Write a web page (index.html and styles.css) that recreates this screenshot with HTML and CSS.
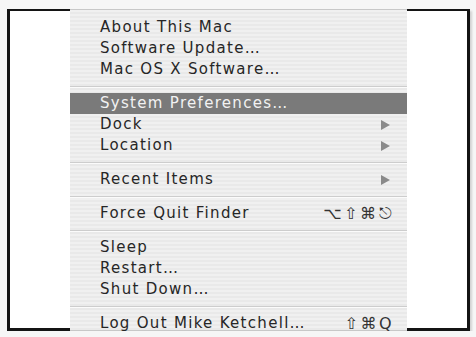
FILE: index.html
```html
<!DOCTYPE html>
<html>
<head>
<meta charset="utf-8">
<link rel="stylesheet" href="styles.css">
</head>
<body>
<div class="frame">
  <div class="side"></div>
  <div class="menu">
    <div class="item">About This Mac</div>
    <div class="item">Software Update…</div>
    <div class="item">Mac OS X Software…</div>
    <div class="sep"></div>
    <div class="item hl">System Preferences…</div>
    <div class="item">Dock<svg class="arrow" width="9" height="10" viewBox="0 0 9 10"><polygon points="0,0 9,5 0,10"/></svg></div>
    <div class="item">Location<svg class="arrow" width="9" height="10" viewBox="0 0 9 10"><polygon points="0,0 9,5 0,10"/></svg></div>
    <div class="sep"></div>
    <div class="item">Recent Items<svg class="arrow" width="9" height="10" viewBox="0 0 9 10"><polygon points="0,0 9,5 0,10"/></svg></div>
    <div class="sep"></div>
    <div class="item">Force Quit Finder<span class="key">⌥⇧⌘⎋</span></div>
    <div class="sep"></div>
    <div class="item">Sleep</div>
    <div class="item">Restart…</div>
    <div class="item">Shut Down…</div>
    <div class="sep"></div>
    <div class="item">Log Out Mike Ketchell…<span class="key">⇧⌘Q</span></div>
  </div>
  <div class="side"></div>
</div>
</body>
</html>
```

FILE: styles.css
```css
html, body {
  margin: 0;
  padding: 0;
  background: #f6f6f6;
}
.frame {
  margin: 9px 0 0 7px;
  width: 457px;
  height: 322px;
  display: flex;
  border-left: 3px solid #141414;
  border-right: 3px solid #141414;
  box-shadow: 2px 2px 2px rgba(0,0,0,0.15);
}
.side {
  width: 60px;
  background: #ffffff;
  border-top: 2px solid #141414;
  border-bottom: 3px solid #141414;
}
.menu {
  width: 337px;
  box-sizing: border-box;
  padding-top: 7px;
  background: repeating-linear-gradient(#f0f0f0 0, #f0f0f0 2px, #e9e9e9 2px, #e9e9e9 4px);
  border-top: 1px solid #c8c8c8;
  border-bottom: 1px solid #c8c8c8;
  font-family: "DejaVu Sans", sans-serif;
  font-size: 15px;
  letter-spacing: 1.3px;
  color: #262626;
}
.item {
  height: 21px;
  line-height: 21px;
  padding: 0 15px 0 30px;
  display: flex;
  align-items: center;
  justify-content: space-between;
  white-space: nowrap;
}
.item.hl {
  background: #7a7a7a;
  color: #f2f2f2;
}
.sep {
  height: 1px;
  margin: 6px 0 5px;
  background: #cdcdcd;
  border-bottom: 1px solid #fbfbfb;
}
.arrow {
  fill: #8a8a8a;
  margin-right: 2px;
}
.key {
  font-size: 16px;
  letter-spacing: 2.5px;
  margin-right: -2px;
  color: #333;
}
```
